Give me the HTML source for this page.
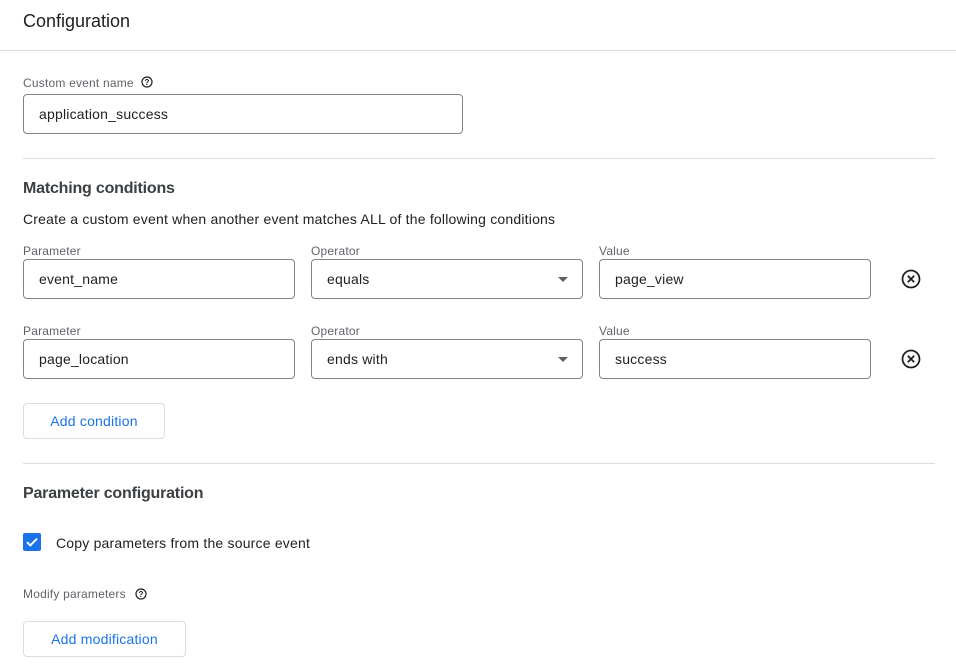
<!DOCTYPE html><html><head><style>
body{margin:0;width:956px;height:670px;background:#fff;font-family:"Liberation Sans",sans-serif;color:#202124;position:relative;overflow:hidden;letter-spacing:0.2px}
.a{position:absolute}
.lbl{position:absolute;font-size:12px;color:#5f6368}
.in{position:absolute;border:1px solid #80868b;border-radius:4px;box-sizing:border-box;height:40px;font-size:14px;line-height:38px;padding-left:15px;color:#202124}
.hr{position:absolute;height:1px;background:#dadce0}
.btn{position:absolute;border:1px solid #dadce0;border-radius:4px;box-sizing:border-box;height:36px;color:#1a73e8;font-size:14px;line-height:34px;text-align:center}
.h{position:absolute;font-size:16px;font-weight:bold;color:#3c4043;letter-spacing:-0.2px}
.tri{position:absolute;right:14px;top:17px;width:0;height:0;border-left:5px solid transparent;border-right:5px solid transparent;border-top:5px solid #5f6368}
</style></head><body>
<div class="a" style="left:23px;top:11px;font-size:18px;color:#202124;letter-spacing:0">Configuration</div>
<div class="hr" style="left:0;top:50px;width:956px"></div>
<div class="lbl" style="left:23px;top:76px">Custom event name</div>
<svg class="a" style="left:141px;top:76px" width="12" height="12" viewBox="0 0 12 12"><circle cx="6" cy="6" r="5" fill="none" stroke="#202124" stroke-width="1.2"/><text x="6" y="9" font-size="8" text-anchor="middle" font-family="Liberation Sans" font-weight="bold" fill="#202124">?</text></svg>
<div class="in" style="left:23px;top:94px;width:440px">application_success</div>
<div class="hr" style="left:23px;top:158px;width:912px"></div>
<div class="h" style="left:23px;top:180px">Matching conditions</div>
<div class="a" style="left:23px;top:211px;font-size:14px">Create a custom event when another event matches ALL of the following conditions</div>

<div class="lbl" style="left:23px;top:244px">Parameter</div>
<div class="lbl" style="left:311px;top:244px">Operator</div>
<div class="lbl" style="left:599px;top:244px">Value</div>
<div class="in" style="left:23px;top:259px;width:272px">event_name</div>
<div class="in" style="left:311px;top:259px;width:272px">equals<div class="tri"></div></div>
<div class="in" style="left:599px;top:259px;width:272px">page_view</div>

<div class="lbl" style="left:23px;top:324px">Parameter</div>
<div class="lbl" style="left:311px;top:324px">Operator</div>
<div class="lbl" style="left:599px;top:324px">Value</div>
<div class="in" style="left:23px;top:339px;width:272px">page_location</div>
<div class="in" style="left:311px;top:339px;width:272px">ends with<div class="tri"></div></div>
<div class="in" style="left:599px;top:339px;width:272px">success</div>

<svg class="a" style="left:900px;top:268px" width="22" height="22" viewBox="0 0 22 22"><circle cx="11" cy="11" r="8.5" fill="none" stroke="#202124" stroke-width="1.8"/><path d="M7.8 7.8L14.2 14.2M14.2 7.8L7.8 14.2" stroke="#202124" stroke-width="1.8"/></svg>
<svg class="a" style="left:900px;top:348px" width="22" height="22" viewBox="0 0 22 22"><circle cx="11" cy="11" r="8.5" fill="none" stroke="#202124" stroke-width="1.8"/><path d="M7.8 7.8L14.2 14.2M14.2 7.8L7.8 14.2" stroke="#202124" stroke-width="1.8"/></svg>

<div class="btn" style="left:23px;top:403px;width:142px">Add condition</div>
<div class="hr" style="left:23px;top:463px;width:912px"></div>
<div class="h" style="left:23px;top:485px">Parameter configuration</div>
<svg class="a" style="left:23px;top:533px" width="18" height="18" viewBox="0 0 18 18"><rect width="18" height="18" rx="2" fill="#1a73e8"/><path d="M4 9.2L7.3 12.4L14 5.7" stroke="#fff" stroke-width="2" fill="none"/></svg>
<div class="a" style="left:56px;top:535px;font-size:14px">Copy parameters from the source event</div>
<div class="lbl" style="left:23px;top:587px">Modify parameters</div>
<svg class="a" style="left:135px;top:588px" width="12" height="12" viewBox="0 0 12 12"><circle cx="6" cy="6" r="5" fill="none" stroke="#202124" stroke-width="1.2"/><text x="6" y="9" font-size="8" text-anchor="middle" font-family="Liberation Sans" font-weight="bold" fill="#202124">?</text></svg>
<div class="btn" style="left:23px;top:621px;width:163px">Add modification</div>
</body></html>
